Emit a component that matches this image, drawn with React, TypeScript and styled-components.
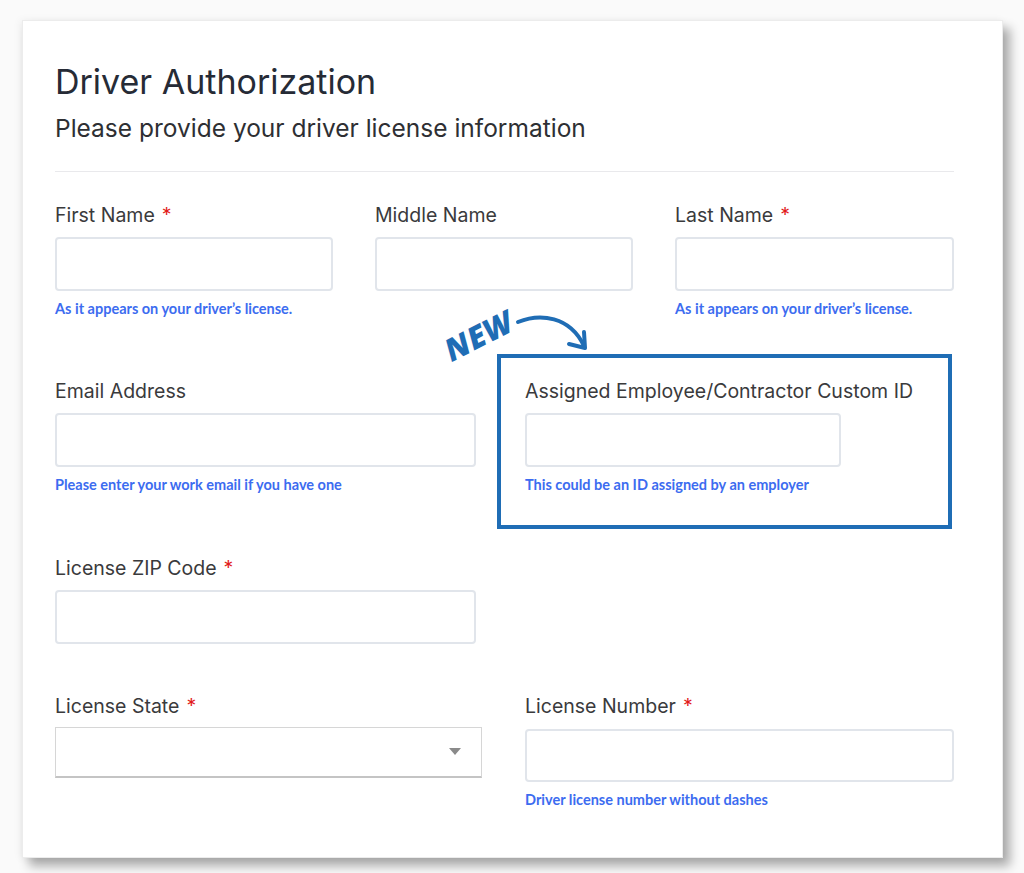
import React from 'react';
import styled, { createGlobalStyle } from 'styled-components';

const GlobalStyle = createGlobalStyle`
  html, body {
    margin: 0;
    padding: 0;
    background: #fafafa;
  }
  * {
    box-sizing: border-box;
  }
`;

const Page = styled.div`
  width: 1024px;
  height: 873px;
  padding: 20px 21px 15px 22px;
  background: #fafafa;
  overflow: hidden;
`;

const Card = styled.div`
  width: 981px;
  height: 838px;
  background: #fff;
  border: 1px solid #ececec;
  box-shadow: -2px 0 8px rgba(0, 0, 0, 0.05), 7px 8px 10px rgba(0, 0, 0, 0.32);
  padding: 41px 48px 0 32px;
  font-family: Inter, 'Noto Sans', sans-serif;
`;

const Title = styled.h1`
  margin: 0;
  font-size: 34px;
  line-height: 40px;
  font-weight: 400;
  color: #262b36;
`;

const Subtitle = styled.h2`
  margin: 11px 0 0;
  font-size: 24.5px;
  line-height: 30px;
  font-weight: 400;
  color: #2e2f33;
`;

const Divider = styled.hr`
  margin: 28px 0 0;
  border: none;
  border-top: 1px solid #e9e9ec;
`;

const Row = styled.div<{ $top: number; $cols: string; $gap: number }>`
  display: grid;
  grid-template-columns: ${p => p.$cols};
  column-gap: ${p => p.$gap}px;
  align-items: start;
  margin-top: ${p => p.$top}px;
`;

const Field = styled.div`
  display: flex;
  flex-direction: column;
`;

const Label = styled.label`
  font-size: 19.5px;
  line-height: 22px;
  color: #3a3a3c;
`;

const Star = styled.span`
  color: #e21b1b;
  margin-left: 7px;
`;

const Input = styled.div<{ $w?: number; $h?: number; $mt?: number }>`
  margin-top: ${p => p.$mt ?? 11}px;
  width: ${p => (p.$w ? `${p.$w}px` : '100%')};
  height: ${p => p.$h ?? 54}px;
  border: 2px solid #e1e5eb;
  border-radius: 4px;
  background: #fff;
`;

const Select = styled.div`
  position: relative;
  margin-top: 10px;
  width: 427px;
  height: 51px;
  border: 1px solid #d6d6d6;
  border-bottom: 2px solid #c4c4c4;
  background: #fff;

  &::after {
    content: '';
    position: absolute;
    right: 20px;
    top: 20px;
    border-left: 6px solid transparent;
    border-right: 6px solid transparent;
    border-top: 7px solid #8a8a8a;
  }
`;

const Help = styled.div`
  margin-top: 10px;
  font-family: Lato, 'Noto Sans', sans-serif;
  font-weight: 700;
  font-size: 14.5px;
  line-height: 16px;
  color: #3c6cf0;
`;

const Highlight = styled.div`
  position: relative;
  margin: -26px 2px -36px -28px;
  padding: 22px 24px 32px 24px;
  border: 4px solid #1f6db5;
`;

const NewTag = styled.div`
  position: absolute;
  left: -59px;
  top: -44px;
  transform: rotate(-27deg);
  font-family: 'Open Sans', Lato, sans-serif;
  font-style: italic;
  font-weight: 800;
  font-size: 31px;
  letter-spacing: 0.5px;
  color: #1f6db5;
`;

const Arrow = styled.svg`
  position: absolute;
  left: 13px;
  top: -48px;
  overflow: visible;
`;

export default function App() {
  return (
    <>
      <GlobalStyle />
      <Page>
        <Card>
          <Title>Driver Authorization</Title>
          <Subtitle>Please provide your driver license information</Subtitle>
          <Divider />

          <Row $top={32} $cols="278px 258px 279px" $gap={42}>
            <Field>
              <Label>
                First Name<Star>*</Star>
              </Label>
              <Input />
              <Help>As it appears on your driver’s license.</Help>
            </Field>
            <Field>
              <Label>Middle Name</Label>
              <Input />
            </Field>
            <Field>
              <Label>
                Last Name<Star>*</Star>
              </Label>
              <Input />
              <Help>As it appears on your driver’s license.</Help>
            </Field>
          </Row>

          <Row $top={63} $cols="421px 429px" $gap={49}>
            <Field>
              <Label>Email Address</Label>
              <Input />
              <Help>Please enter your work email if you have one</Help>
            </Field>
            <Highlight>
              <NewTag>NEW</NewTag>
              <Arrow width="80" height="46" viewBox="0 0 80 46">
                <path
                  d="M4 12 C 26 3, 56 6, 70 36"
                  fill="none"
                  stroke="#1f6db5"
                  strokeWidth="4"
                  strokeLinecap="round"
                />
                <path
                  d="M55 34 L71 38 L70 22"
                  fill="none"
                  stroke="#1f6db5"
                  strokeWidth="4"
                  strokeLinecap="round"
                  strokeLinejoin="round"
                />
              </Arrow>
              <Field>
                <Label>Assigned Employee/Contractor Custom ID</Label>
                <Input $w={316} />
                <Help>This could be an ID assigned by an employer</Help>
              </Field>
            </Highlight>
          </Row>

          <Row $top={64} $cols="421px 429px" $gap={49}>
            <Field>
              <Label>
                License ZIP Code<Star>*</Star>
              </Label>
              <Input />
            </Field>
          </Row>

          <Row $top={51} $cols="421px 429px" $gap={49}>
            <Field>
              <Label>
                License State<Star>*</Star>
              </Label>
              <Select />
            </Field>
            <Field>
              <Label>
                License Number<Star>*</Star>
              </Label>
              <Input $h={53} $mt={12} />
              <Help>Driver license number without dashes</Help>
            </Field>
          </Row>
        </Card>
      </Page>
    </>
  );
}
